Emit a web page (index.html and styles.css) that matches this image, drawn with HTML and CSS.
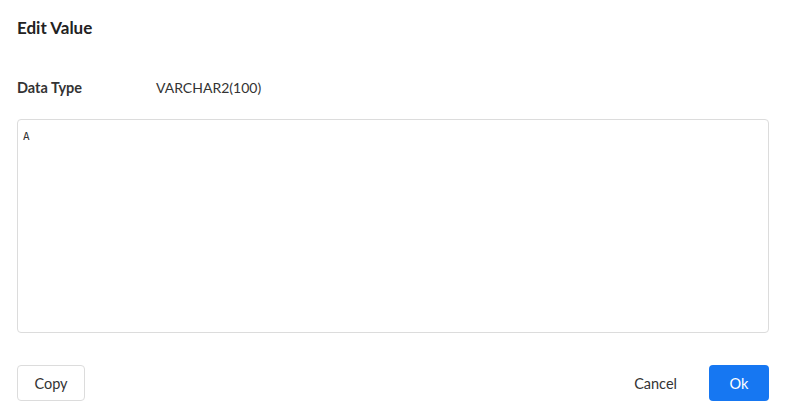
FILE: index.html
```html
<!DOCTYPE html>
<html>
<head>
<meta charset="utf-8">
<link rel="stylesheet" href="styles.css">
</head>
<body>
<div class="dialog">
  <h1 class="title">Edit Value</h1>
  <div class="row">
    <span class="label">Data Type</span>
    <span class="value">VARCHAR2(100)</span>
  </div>
  <div class="editor">A</div>
  <div class="footer">
    <button class="btn btn-default">Copy</button>
    <div class="right">
      <button class="btn btn-text">Cancel</button>
      <button class="btn btn-primary">Ok</button>
    </div>
  </div>
</div>
</body>
</html>
```
FILE: styles.css
```css
html, body {
  margin: 0;
  padding: 0;
  background: #fff;
}
body {
  font-family: Lato, "Noto Sans", sans-serif;
  color: #333;
}
.dialog {
  padding: 17px 20px 0 17px;
  display: flex;
  flex-direction: column;
}
.title {
  margin: 0;
  font-size: 17px;
  font-weight: 700;
  line-height: 22px;
  color: #222;
}
.row {
  margin-top: 37px;
  display: flex;
  align-items: center;
  height: 22px;
  font-size: 14px;
}
.label {
  width: 139px;
  font-weight: 700;
  font-size: 14.5px;
}
.value {
  color: #333;
}
.editor {
  margin-top: 21px;
  border: 1px solid #dcdcdc;
  border-radius: 4px;
  padding: 10px 5px;
  box-sizing: border-box;
  height: 214px;
  font-family: "DejaVu Sans Mono", monospace;
  font-size: 11px;
  color: #333;
}
.footer {
  margin-top: 32px;
  display: flex;
  justify-content: space-between;
  align-items: center;
}
.right {
  display: flex;
  align-items: center;
}
.btn {
  font-family: Lato, "Noto Sans", sans-serif;
  font-size: 14.5px;
  height: 36px;
  border-radius: 4px;
  cursor: pointer;
  padding: 0;
}
.btn-default {
  width: 68px;
  background: #fff;
  border: 1px solid #dcdcdc;
  color: #333;
}
.btn-text {
  background: transparent;
  border: none;
  color: #333;
  margin-right: 32px;
}
.btn-primary {
  width: 60px;
  background: #1677f2;
  border: none;
  color: #fff;
}
```
